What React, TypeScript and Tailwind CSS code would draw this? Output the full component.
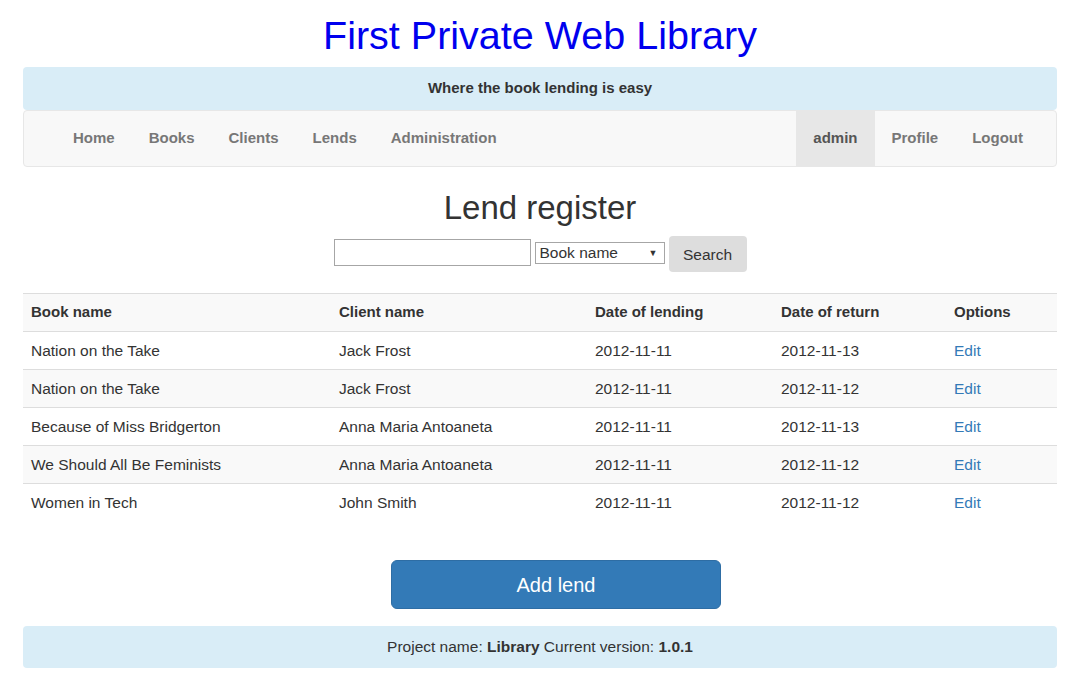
import React from "react";

const rows = [
  ["Nation on the Take", "Jack Frost", "2012-11-11", "2012-11-13"],
  ["Nation on the Take", "Jack Frost", "2012-11-11", "2012-11-12"],
  ["Because of Miss Bridgerton", "Anna Maria Antoaneta", "2012-11-11", "2012-11-13"],
  ["We Should All Be Feminists", "Anna Maria Antoaneta", "2012-11-11", "2012-11-12"],
  ["Women in Tech", "John Smith", "2012-11-11", "2012-11-12"],
];

const cols = ["w-[308px]", "w-[256px]", "w-[186px]", "w-[173px]", "flex-1"];

export default function App() {
  return (
    <div className="min-h-[695px] bg-white font-['Liberation_Sans',Arial,sans-serif] text-[#333]">
      <div className="ml-[23px] mr-[17px]">
        <h1 className="pt-[12px] text-center text-[39.5px] leading-[46px] text-[#0000ee]">
          First Private Web Library
        </h1>
        <div className="mt-[9px] flex h-[43px] items-center justify-center rounded-[4px] bg-[#d9edf7] text-[15px] font-bold text-[#333]">
          Where the book lending is easy
        </div>
        <nav className="flex h-[57px] items-stretch justify-between rounded-[4px] border border-[#e7e7e7] bg-[#f8f8f8] pl-[32px] pr-[16px] text-[15px] font-bold text-[#777]">
          <div className="flex items-stretch">
            {["Home", "Books", "Clients", "Lends", "Administration"].map((t) => (
              <span key={t} className="flex items-center px-[17px]">
                {t}
              </span>
            ))}
          </div>
          <div className="flex items-stretch">
            <span className="flex items-center bg-[#e7e7e7] px-[17px] text-[#555]">admin</span>
            {["Profile", "Logout"].map((t) => (
              <span key={t} className="flex items-center px-[17px]">
                {t}
              </span>
            ))}
          </div>
        </nav>
        <h2 className="mt-[21px] text-center text-[33px] leading-[39px] text-[#333]">Lend register</h2>
        <div className="mt-[9px] flex h-[36px] items-start justify-center gap-[4px]">
          <div className="mt-[3px] h-[27px] w-[197px] border border-[#a6a6a6] bg-white" />
          <div className="mt-[6px] flex h-[22px] w-[130px] items-center justify-between border border-[#a6a6a6] bg-white pl-[4px] pr-[6px] text-[15.5px] leading-none text-[#333]">
            <span>Book name</span>
            <span className="text-[9px] text-[#333]">▼</span>
          </div>
          <div className="flex h-[36px] w-[78px] items-center justify-center rounded-[4px] bg-[#dddddd] pt-[2px] text-[15.5px] text-[#333]">
            Search
          </div>
        </div>
        <div className="mt-[21px] text-[15.5px]">
          <div className="flex h-[38px] items-center border-t border-[#ddd] bg-[#f9f9f9] text-[15px] font-bold">
            {["Book name", "Client name", "Date of lending", "Date of return", "Options"].map((h, i) => (
              <div key={h} className={`${cols[i]} pl-[8px]`}>
                {h}
              </div>
            ))}
          </div>
          {rows.map((r, idx) => (
            <div
              key={idx}
              className={`flex h-[38px] items-center border-t border-[#ddd] ${idx % 2 === 1 ? "bg-[#f9f9f9]" : "bg-white"}`}
            >
              {r.map((c, i) => (
                <div key={i} className={`${cols[i]} pl-[8px]`}>
                  {c}
                </div>
              ))}
              <div className={`${cols[4]} pl-[8px] text-[#337ab7]`}>Edit</div>
            </div>
          ))}
        </div>
        <div className="mt-[39px] flex">
          <div className="ml-[368px] flex h-[49px] w-[330px] items-center justify-center rounded-[6px] border border-[#2e6da4] bg-[#337ab7] text-[20px] text-white">
            Add lend
          </div>
        </div>
        <div className="mt-[17px] flex h-[42px] items-center justify-center rounded-[4px] bg-[#d9edf7] text-[15.5px] text-[#333]">
          <span>
            Project name: <b>Library</b> Current version: <b>1.0.1</b>
          </span>
        </div>
      </div>
    </div>
  );
}
